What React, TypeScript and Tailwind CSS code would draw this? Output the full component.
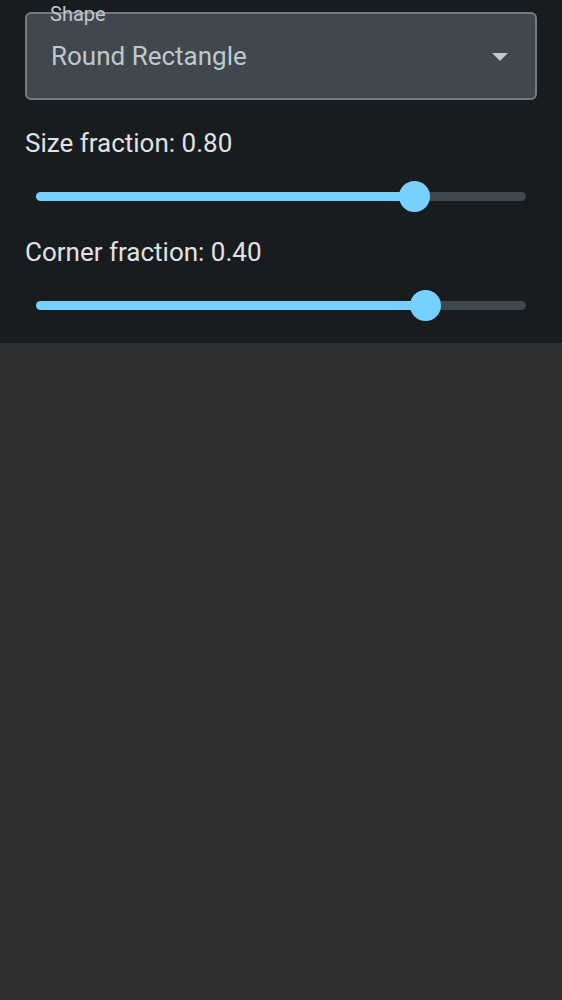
import { useState } from "react";

const SHAPES = ["Round Rectangle", "Rectangle", "Circle", "Oval"];

const RANGE_CLASSES =
  "block h-[31px] w-full cursor-pointer appearance-none rounded-full bg-transparent outline-none " +
  "[&::-webkit-slider-runnable-track]:h-[9px] [&::-webkit-slider-runnable-track]:rounded-full " +
  "[&::-webkit-slider-runnable-track]:bg-[linear-gradient(to_right,#76d1ff_var(--fill),#41484d_var(--fill))] " +
  "[&::-webkit-slider-thumb]:-mt-[11px] [&::-webkit-slider-thumb]:size-[31px] " +
  "[&::-webkit-slider-thumb]:appearance-none [&::-webkit-slider-thumb]:rounded-full " +
  "[&::-webkit-slider-thumb]:bg-[#76d1ff]";

type FractionSliderProps = {
  id: string;
  label: string;
  min: number;
  max: number;
  initial: number;
};

function FractionSlider({ id, label, min, max, initial }: FractionSliderProps) {
  const [value, setValue] = useState(initial);
  const fill = ((value - min) / (max - min)) * 100;

  return (
    <div className="flex flex-col gap-[22px]">
      <label htmlFor={id} className="text-[26px] leading-8 text-[#e1e2e5]">
        {label}: {value.toFixed(2)}
      </label>
      <div className="px-[11px]">
        <input
          id={id}
          type="range"
          min={min}
          max={max}
          step="any"
          value={value}
          onChange={(e) => setValue(Number(e.target.value))}
          className={RANGE_CLASSES}
          style={{ "--fill": `${fill}%` } as React.CSSProperties}
        />
      </div>
    </div>
  );
}

export default function App() {
  const [shape, setShape] = useState(SHAPES[0]);

  return (
    <div className="min-h-screen bg-[#303030] font-[Roboto,sans-serif]">
      <section className="bg-[#191c1e] px-[25px] pt-3 pb-[22px]">
        <div className="relative">
          <select
            id="shape"
            value={shape}
            onChange={(e) => setShape(e.target.value)}
            className="block h-[88px] w-full appearance-none rounded-md border-2 border-[#737b80] bg-[#41484d] px-6 text-[26px] text-[#c0c7cd] outline-none"
          >
            {SHAPES.map((name) => (
              <option key={name}>{name}</option>
            ))}
          </select>
          <label
            htmlFor="shape"
            className="absolute -top-3 left-[25px] text-[20px] leading-7 text-[#c0c7cd]"
          >
            Shape
          </label>
          <svg
            viewBox="0 0 16 8"
            aria-hidden="true"
            className="pointer-events-none absolute top-[41px] right-[29px] h-2 w-4 fill-[#c0c7cd]"
          >
            <path d="M0 0h16L8 8z" />
          </svg>
        </div>
        <div className="mt-[27px] flex flex-col gap-6">
          <FractionSlider id="size" label="Size fraction" min={0.04} max={1} initial={0.8} />
          <FractionSlider id="corner" label="Corner fraction" min={0} max={0.491} initial={0.4} />
        </div>
      </section>
    </div>
  );
}
